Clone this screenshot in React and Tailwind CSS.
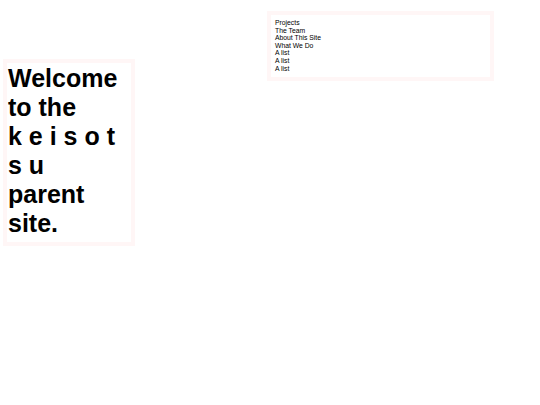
export default function App() {
  const links = ['Projects', 'The Team', 'About This Site', 'What We Do', 'A list', 'A list', 'A list'];
  return (
    <div className="flex items-start bg-white min-h-[405px]" style={{ fontFamily: '"Liberation Sans", Arial, sans-serif' }}>
      <div className="ml-[3px] mt-[59px] w-[132px] border-4 border-[#fff6f6] px-[1px] pt-[1px] pb-[4px]">
        <h1 className="text-[25px] font-bold leading-[29px] text-black">
          Welcome to the
          <span className="block">k e i s o t s u</span>
          parent site.
        </h1>
      </div>
      <nav className="ml-[132px] mt-[11px] w-[227px] border-4 border-[#fff6f6] px-[4px] pt-[4px] pb-[5px]">
        <ul className="text-[6.8px] leading-[7.6px] text-black">
          {links.map((l, i) => (
            <li key={i}>{l}</li>
          ))}
        </ul>
      </nav>
    </div>
  );
}
